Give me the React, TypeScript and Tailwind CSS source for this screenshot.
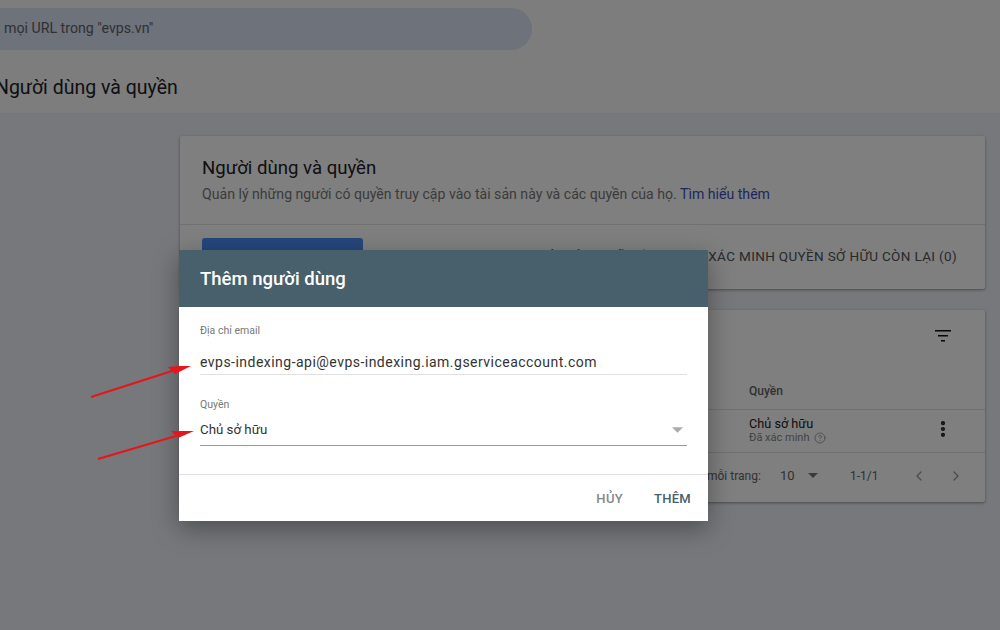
import { ChevronLeft, ChevronRight, CircleHelp, EllipsisVertical } from "lucide-react";

const font = { fontFamily: "Roboto, sans-serif" };

const CaretDown = ({ className }: { className: string }) => (
	<svg viewBox="0 0 10 5" className={className} fill="currentColor">
		<path d="M0 0h10L5 5z" />
	</svg>
);

const FilterIcon = () => (
	<svg viewBox="0 0 16 12" className="w-4 h-3 text-[#0d0d0d]" fill="currentColor">
		<path d="M0 0h16v1.6H0zM3 5h10v1.6H3zM6 10h4v1.6H6z" />
	</svg>
);

const ArrowsOverlay = () => (
	<svg className="absolute left-0 top-0 pointer-events-none" width="1000" height="630" viewBox="0 0 1000 630">
		<path d="M91 397L172 371" stroke="#e8141c" strokeWidth="2" fill="none" />
		<path d="M191 366L179 366L168 367L175 374z" fill="#e8141c" />
		<path d="M98 459L176 436" stroke="#e8141c" strokeWidth="2" fill="none" />
		<path d="M194 431L171 431L178 438z" fill="#e8141c" />
	</svg>
);

const BackgroundPage = () => (
	<div className="w-[1000px] h-[630px] bg-[#eef0f6] overflow-hidden">
		<div className="h-[114px] bg-[#fafafc] border-b border-[#eaeaec] overflow-hidden">
			<div className="w-[532px] h-[42px] mt-2 rounded-r-full bg-[#dde4f6] flex items-center pl-1">
				<p className="text-[14.2px] text-[#5f6368]">mọi URL trong "evps.vn"</p>
			</div>
			<p className="text-[19.5px] text-[#202124] mt-[26px] -ml-[5px] leading-6 whitespace-nowrap">Người dùng và quyền</p>
		</div>

		<div className="flex flex-col gap-[21px] pl-[180px] pr-[15px] pt-[22px]">
			<div className="h-[153px] bg-white rounded-[2px] shadow-[0_1px_3px_rgba(0,0,0,0.4)]">
				<div className="h-[89px] border-b border-[#e0e0e0] pl-[22px] pt-[20px]">
					<p className="text-[18.6px] leading-6 text-[#202124]">Người dùng và quyền</p>
					<p className="text-[14.12px] leading-5 mt-1 text-[#777]">
						Quản lý những người có quyền truy cập vào tài sản này và các quyền của họ. <span className="text-[#3a4fc0]">Tìm hiểu thêm</span>
					</p>
				</div>
				<div className="flex justify-between pl-[22px] pr-[28px] pt-[13px]">
					<div className="w-[161px] h-9 rounded-[3px] bg-[#4a8ef8] flex items-center justify-center pt-[3px] text-[13px] font-medium text-white">
						THÊM NGƯỜI DÙNG
					</div>
					<div className="flex gap-3 text-[13.5px] text-[#4f5256] tracking-[0.35px] pt-2">
						<p>NGƯỜI DÙNG ĐÃ XÁC MINH</p>
						<p>XÁC MINH QUYỀN SỞ HỮU CÒN LẠI (0)</p>
					</div>
				</div>
			</div>

			<div className="h-[192px] bg-white rounded-[2px] shadow-[0_1px_3px_rgba(0,0,0,0.4)] flex flex-col items-stretch">
				<div className="h-[66px] flex justify-end pr-[34px] pt-[20px]">
					<FilterIcon />
				</div>
				<div className="h-[34px] border-b border-[#e0e0e0] pl-[569px] pt-[7px]">
					<p className="text-[12px] font-medium leading-4 text-[#5f6368]">Quyền</p>
				</div>
				<div className="h-[43px] border-b border-[#e0e0e0] pl-[569px] pr-[32px] flex items-center justify-between">
					<div className="-mt-[2px]">
						<p className="text-[12.7px] leading-[15px] text-[#202124]">Chủ sở hữu</p>
						<p className="text-[11px] leading-[13px] text-[#80868b] flex items-center gap-[5px]">
							Đã xác minh <CircleHelp size={12} strokeWidth={1.5} />
						</p>
					</div>
					<EllipsisVertical size={20} strokeWidth={3} className="text-[#202124] -mt-1" />
				</div>
				<div className="flex-1 flex items-center pl-[527px] pb-1 text-[12px] text-[#5f6368]">
					<span className="w-[73px]">mỗi trang:</span>
					<span className="w-[28px] text-[13px]">10</span>
					<CaretDown className="w-[10px] h-[5px] text-[#777]" />
					<span className="ml-[32px] w-[30px]">1-1/1</span>
					<ChevronLeft size={16} className="ml-[31px] text-[#999]" />
					<ChevronRight size={16} className="ml-[21px] text-[#999]" />
				</div>
			</div>
		</div>
	</div>
);

const AddUserDialog = () => (
	<div className="absolute left-[179px] top-[250px] w-[529px] h-[271px] bg-white flex flex-col shadow-[0_8px_24px_rgba(0,0,0,0.35)]">
		<div className="h-[57px] bg-[#47606c] flex items-center px-[21px] pt-[2px] shrink-0">
			<p className="text-[18.5px] font-medium text-white">Thêm người dùng</p>
		</div>

		<div className="h-[168px] px-[21px] border-b border-[#e0e0e0] shrink-0">
			<p className="text-[10.5px] leading-3 text-[#777] mt-[18px]">Địa chỉ email</p>
			<div className="mt-[15px] h-[23px] border-b border-[#e0e0e0]">
				<p className="text-[14px] leading-5 tracking-[0.475px] text-[#333]">evps-indexing-api@evps-indexing.iam.gserviceaccount.com</p>
			</div>
			<p className="text-[10.5px] leading-3 text-[#777] mt-6">Quyền</p>
			<div className="mt-2 h-[27px] border-b border-[#999] flex justify-between pr-[4px]">
				<p className="text-[13.3px] leading-5 text-[#333] mt-[1px]">Chủ sở hữu</p>
				<CaretDown className="w-[11px] h-[6px] text-[#aaa] mt-[8px]" />
			</div>
		</div>

		<div className="flex-1 flex justify-end items-center gap-[32px] pr-[17px] pt-[1px] text-[13px] font-medium tracking-[0.3px]">
			<span className="text-[#888] translate-x-[1px]">HỦY</span>
			<span className="text-[#47606c]">THÊM</span>
		</div>
	</div>
);

const App = () => {
	return (
		<div className="relative w-[1000px] h-[630px] overflow-hidden" style={font}>
			<BackgroundPage />
			<div className="absolute inset-0 bg-black/50" />
			<AddUserDialog />
			<ArrowsOverlay />
		</div>
	);
};

export default App;
